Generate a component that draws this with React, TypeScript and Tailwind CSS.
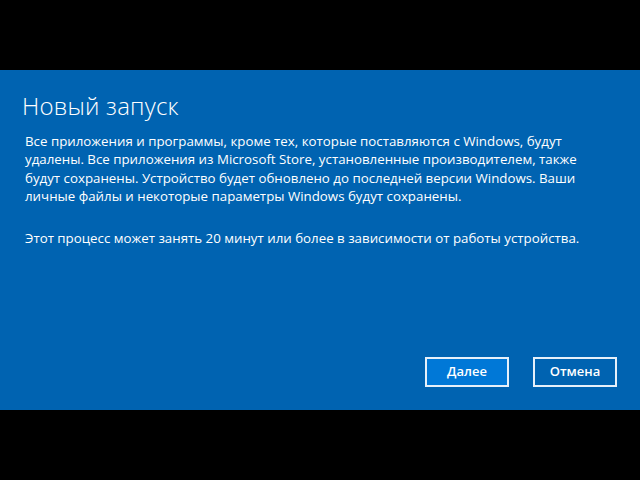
export default function App() {
  return (
    <div className="w-[640px] h-[480px] bg-black flex flex-col justify-center">
      <div
        className="h-[340px] bg-[#0063b1] text-white flex flex-col px-[22px] pt-[20px] pb-[23px]"
        style={{ fontFamily: '"Open Sans", "Noto Sans", sans-serif' }}
      >
        <h1 className="text-[24px] font-light leading-[32px] tracking-[0.2px]">Новый запуск</h1>

        <div className="mt-[10px] pl-[3px] text-[13.3px] leading-[18.4px] whitespace-nowrap">
          <p>
            Все приложения и программы, кроме тех, которые поставляются с Windows, будут
            <br />
            удалены. Все приложения из Microsoft Store, установленные производителем, также
            <br />
            будут сохранены. Устройство будет обновлено до последней версии Windows. Ваши
            <br />
            личные файлы и некоторые параметры Windows будут сохранены.
          </p>
          <p className="mt-[23px]">
            Этот процесс может занять 20 минут или более в зависимости от работы устройства.
          </p>
        </div>

        <div className="mt-auto flex justify-end gap-[24px] pr-[1px]">
          <button className="w-[84px] h-[30px] border-2 border-[#e6f0fa] bg-[#0078d7] text-[13px] font-semibold">
            Далее
          </button>
          <button className="w-[84px] h-[30px] border-2 border-[#e6f0fa] bg-[#0063b1] text-[13px] font-semibold">
            Отмена
          </button>
        </div>
      </div>
    </div>
  );
}
